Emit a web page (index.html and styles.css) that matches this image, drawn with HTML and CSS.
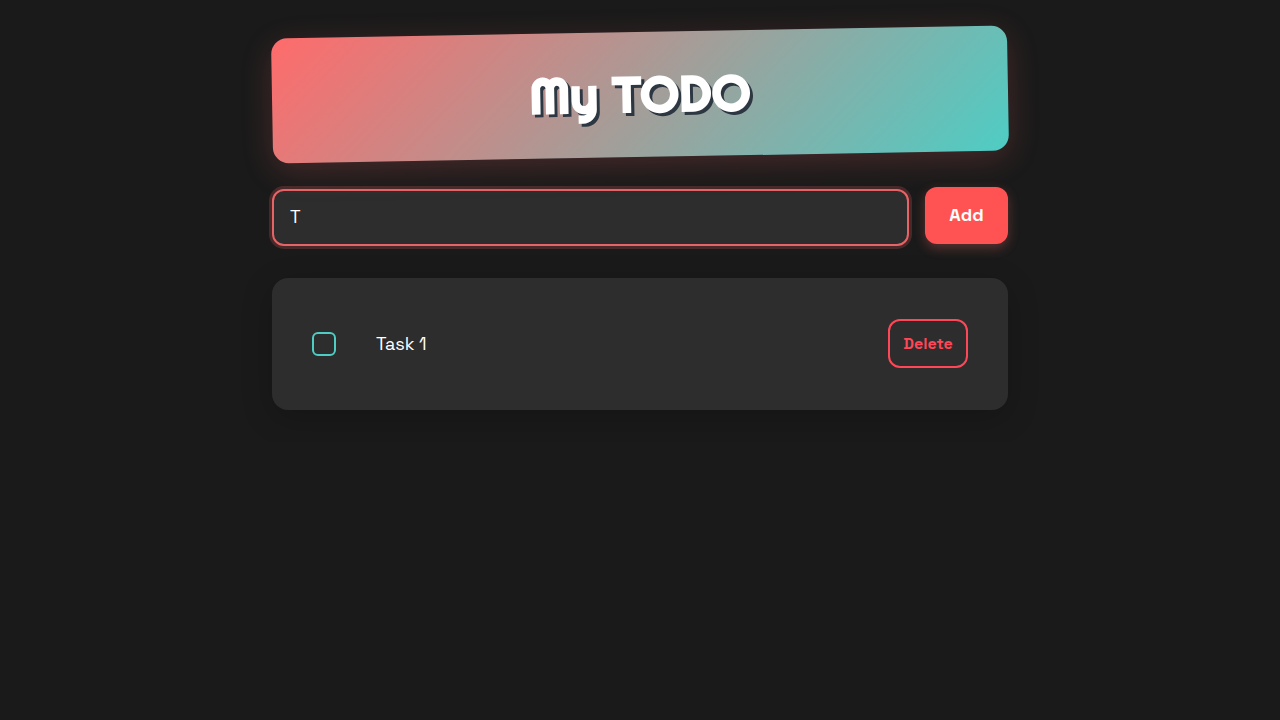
FILE: index.html
```html
<!DOCTYPE html>
<html lang="en">
<head>
<meta charset="utf-8">
<meta name="viewport" content="width=device-width, initial-scale=1">
<title>My TODO</title>
<link rel="stylesheet" href="styles.css">
</head>
<body>
<main class="app">
  <header class="banner">
    <h1 class="banner-title">My TODO</h1>
  </header>
  <form class="task-form">
    <input class="task-input" type="text" value="T" aria-label="New task">
    <button class="add-button" type="button">Add</button>
  </form>
  <ul class="task-list">
    <li class="task">
      <input class="task-check" type="checkbox" id="task-1">
      <label class="task-label" for="task-1">Task 1</label>
      <button class="delete-button" type="button">Delete</button>
    </li>
  </ul>
</main>
</body>
</html>
```

FILE: styles.css
```css
* {
  box-sizing: border-box;
}

body {
  margin: 0;
  background: #1a1a1a;
  color: #fff;
  font-family: "Space Grotesk", Inter, sans-serif;
  font-size: 18px;
  line-height: 24px;
}

.app {
  display: flex;
  flex-direction: column;
  gap: 32px;
  max-width: 800px;
  margin: 0 auto;
  padding: 32px;
}

.banner {
  padding: 32px;
  border-radius: 16px;
  background: linear-gradient(135deg, #ff6b6b, #4ecdc4);
  box-shadow: 0 8px 32px rgba(255, 107, 107, 0.2);
  text-align: center;
  transform: rotate(-1deg);
}

.banner-title {
  margin: 0;
  font-family: Righteous, Lato, sans-serif;
  font-size: 50px;
  font-weight: 700;
  line-height: 61px;
  text-shadow: 3px 3px 0 #2d3742;
}

.task-form {
  display: flex;
  gap: 16px;
}

.task-input {
  flex: 1;
  min-width: 0;
  padding: 14px 16px 16px;
  border: 2px solid #e56467;
  border-radius: 12px;
  outline: none;
  background: #2d2d2d;
  color: #fff;
  font: inherit;
  line-height: 23px;
  box-shadow: 0 0 0 3px rgba(255, 107, 107, 0.2);
}

.add-button {
  min-width: 83px;
  padding: 15px 24px 17px;
  border: 0;
  border-radius: 12px;
  background: #ff5252;
  color: #fff;
  font: inherit;
  font-weight: 700;
  line-height: 25px;
  box-shadow: 0 4px 12px rgba(255, 107, 107, 0.3);
  transform: translateY(-2px);
}

.task-list {
  margin: 0;
  padding: 24px;
  border-radius: 16px;
  background: #2d2d2d;
  box-shadow: 0 8px 32px rgba(0, 0, 0, 0.2);
  list-style: none;
}

.task {
  display: flex;
  align-items: center;
  gap: 40px;
  padding: 17px 16px 18px;
}

.task-check {
  appearance: none;
  width: 24px;
  height: 24px;
  margin: 0;
  border: 2px solid #4ecdc4;
  border-radius: 6px;
}

.task-label {
  flex: 1;
}

.delete-button {
  min-width: 80px;
  padding: 12px 11px;
  border: 2px solid #ff4757;
  border-radius: 12px;
  background: transparent;
  color: #ff4757;
  font: inherit;
  font-size: 16px;
  font-weight: 700;
  line-height: 21px;
}
```
